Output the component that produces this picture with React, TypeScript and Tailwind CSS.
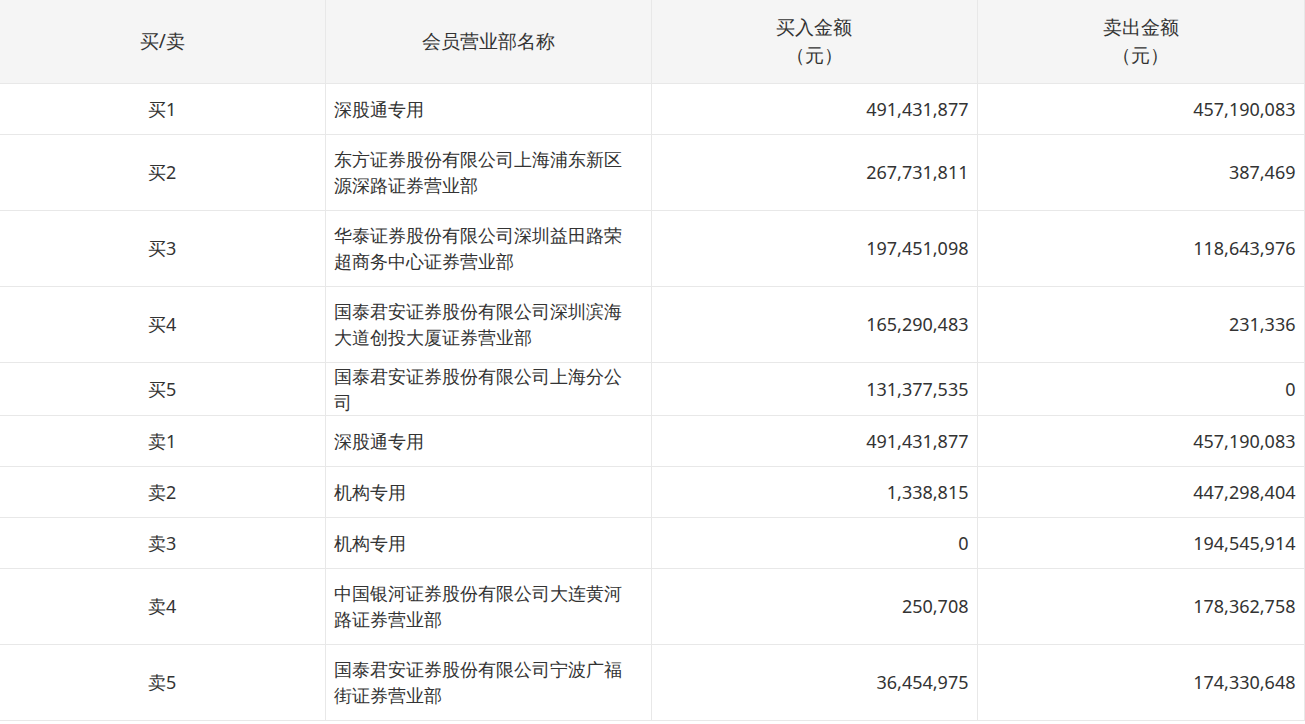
const rows: [string, string, string, string][] = [
  ["买1", "深股通专用", "491,431,877", "457,190,083"],
  ["买2", "东方证券股份有限公司上海浦东新区源深路证券营业部", "267,731,811", "387,469"],
  ["买3", "华泰证券股份有限公司深圳益田路荣超商务中心证券营业部", "197,451,098", "118,643,976"],
  ["买4", "国泰君安证券股份有限公司深圳滨海大道创投大厦证券营业部", "165,290,483", "231,336"],
  ["买5", "国泰君安证券股份有限公司上海分公司", "131,377,535", "0"],
  ["卖1", "深股通专用", "491,431,877", "457,190,083"],
  ["卖2", "机构专用", "1,338,815", "447,298,404"],
  ["卖3", "机构专用", "0", "194,545,914"],
  ["卖4", "中国银河证券股份有限公司大连黄河路证券营业部", "250,708", "178,362,758"],
  ["卖5", "国泰君安证券股份有限公司宁波广福街证券营业部", "36,454,975", "174,330,648"],
];

export default function App() {
  return (
    <div className="w-[1305px] bg-white text-[18px] leading-[26px] text-[#333] font-['Microsoft_YaHei','Noto_Sans_CJK_SC',sans-serif]">
      <table className="w-[1304px] table-fixed border-collapse">
        <colgroup>
          <col className="w-[325px]" />
          <col className="w-[326px]" />
          <col className="w-[326px]" />
          <col className="w-[327px]" />
        </colgroup>
        <thead>
          <tr className="h-[83px] bg-[#f5f5f5] text-[19px] leading-[28px]">
            <th className="border border-[#e8e8e8] border-t-0 border-l-0 font-normal">买/卖</th>
            <th className="border border-[#e8e8e8] border-t-0 font-normal">会员营业部名称</th>
            <th className="border border-[#e8e8e8] border-t-0 font-normal">买入金额<br />（元）</th>
            <th className="border border-[#e8e8e8] border-t-0 font-normal">卖出金额<br />（元）</th>
          </tr>
        </thead>
        <tbody>
          {rows.map((r, i) => (
            <tr key={i} className={r[1].length > 17 ? "h-[76px]" : "h-[51px]"}>
              <td className="border border-[#e8e8e8] border-l-0 text-center">{r[0]}</td>
              <td className="border border-[#e8e8e8] pl-2 pr-3">{r[1]}</td>
              <td className="border border-[#e8e8e8] px-2 text-right">{r[2]}</td>
              <td className="border border-[#e8e8e8] px-2 text-right">{r[3]}</td>
            </tr>
          ))}
        </tbody>
      </table>
    </div>
  );
}
